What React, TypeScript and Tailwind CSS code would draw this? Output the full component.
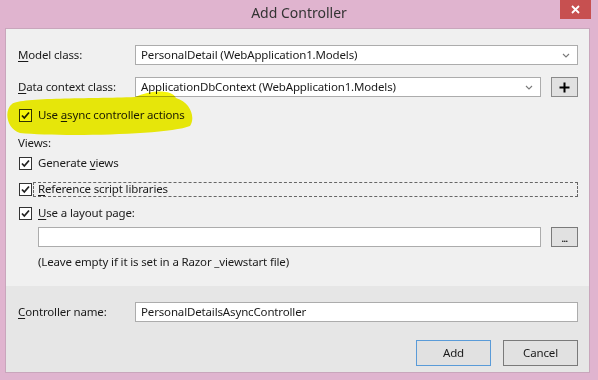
import React from "react";

const font = { fontFamily: '"Segoe UI", "Noto Sans", "Open Sans", sans-serif' };

function Check() {
  return (
    <span className="flex h-[13px] w-[13px] shrink-0 items-center justify-center border border-[#333333] bg-white">
      <svg width="11" height="11" viewBox="0 0 11 11">
        <path d="M2 5.5 L4.3 8 L9 2.5" fill="none" stroke="#222" strokeWidth="1.8" />
      </svg>
    </span>
  );
}

function Chevron() {
  return (
    <svg width="8" height="5" viewBox="0 0 8 5" className="shrink-0">
      <path d="M1 1 L4 4 L7 1" fill="none" stroke="#7a7a7a" strokeWidth="1.1" />
    </svg>
  );
}

function U({ children }: { children: React.ReactNode }) {
  return <span className="underline underline-offset-2 decoration-1">{children}</span>;
}

export default function App() {
  return (
    <div
      className="relative flex h-[380px] w-[598px] flex-col overflow-hidden bg-[#e0b4cf] text-[11.5px] tracking-[-0.15px] text-[#1a1a1a]"
      style={font}
    >
      {/* title bar */}
      <div className="relative flex h-[28px] shrink-0 items-center justify-center">
        <span className="pb-[3px] text-[14px] tracking-normal text-[#333333]">Add Controller</span>
        <div className="absolute right-[7px] top-0 flex h-[19px] w-[31px] items-center justify-center bg-[#c75050]">
          <svg width="9" height="9" viewBox="0 0 9 9">
            <path d="M1 1 L8 8 M8 1 L1 8" stroke="#ffffff" strokeWidth="1.8" />
          </svg>
        </div>
      </div>

      {/* client */}
      <div className="ml-[5px] mr-[8px] flex h-[345px] flex-col border border-[#c9a6bc]">
        {/* upper section */}
        <div className="flex h-[257px] flex-col bg-[#f0f0f0] pl-[12px] pr-[11px] pt-[16px]">
          <div className="flex h-[20px] items-center">
            <span className="w-[117px]">
              <U>M</U>odel class:
            </span>
            <div className="flex h-[20px] flex-1 items-center justify-between border border-[#acacac] bg-white pl-[5px] pr-[7px]">
              <span>PersonalDetail (WebApplication1.Models)</span>
              <Chevron />
            </div>
          </div>
          <div className="mt-[12px] flex h-[20px] items-center">
            <span className="w-[117px]">
              <U>D</U>ata context class:
            </span>
            <div className="flex h-[20px] flex-1 items-center justify-between border border-[#acacac] bg-white pl-[5px] pr-[7px]">
              <span>ApplicationDbContext (WebApplication1.Models)</span>
              <Chevron />
            </div>
            <div className="ml-[10px] flex h-[20px] w-[27px] items-center justify-center border border-[#8a8a8a] bg-[#e1e1e1]">
              <svg width="11" height="11" viewBox="0 0 11 11">
                <path d="M5.5 0.5 V10.5 M0.5 5.5 H10.5" stroke="#000" strokeWidth="2" />
              </svg>
            </div>
          </div>
          <div className="mt-[8px] flex h-[20px] items-center pl-[1px]">
            <Check />
            <span className="ml-[6px]">
              Use <U>a</U>sync controller actions
            </span>
          </div>
          <div className="mt-[8px] flex h-[20px] items-center">Views:</div>
          <div className="flex h-[20px] items-center pl-[1px]">
            <Check />
            <span className="ml-[6px]">
              Generate <U>v</U>iews
            </span>
          </div>
          <div className="mt-[6px] flex h-[20px] items-center pl-[1px]">
            <Check />
            <div className="ml-[1px] flex h-[15px] flex-1 items-center border border-dashed border-[#666666] pl-[4px]">
              <span>
                <U>R</U>eference script libraries
              </span>
            </div>
          </div>
          <div className="mt-[4px] flex h-[20px] items-center pl-[1px]">
            <Check />
            <span className="ml-[6px]">
              <U>U</U>se a layout page:
            </span>
          </div>
          <div className="mt-[4px] flex h-[20px] items-center pl-[20px]">
            <div className="h-[20px] flex-1 border border-[#acacac] bg-white" />
            <div className="ml-[10px] flex h-[20px] w-[27px] items-end justify-center border border-[#7a7a7a] bg-[#e1e1e1] pb-[3px]">
              <span className="text-[9px] font-bold leading-[9px] tracking-[-0.5px]">...</span>
            </div>
          </div>
          <div className="mt-[5px] flex h-[20px] items-center pl-[20px]">
            (Leave empty if it is set in a Razor _viewstart file)
          </div>
        </div>

        {/* lower section */}
        <div className="flex flex-1 flex-col bg-[#e6e6e6] pl-[12px] pr-[11px] pt-[16px]">
          <div className="flex h-[20px] items-center">
            <span className="w-[117px]">
              <U>C</U>ontroller name:
            </span>
            <div className="flex h-[20px] flex-1 items-center border border-[#acacac] bg-white pl-[5px]">
              PersonalDetailsAsyncController
            </div>
          </div>
          <div className="mt-[18px] flex justify-end gap-[12px]">
            <div className="flex h-[26px] w-[75px] items-center justify-center border border-[#5a9bd8] bg-[#e1e1e1]">
              Add
            </div>
            <div className="flex h-[26px] w-[75px] items-center justify-center border border-[#7a7a7a] bg-[#e1e1e1]">
              Cancel
            </div>
          </div>
        </div>
      </div>

      {/* yellow highlighter annotation */}
      <svg
        className="pointer-events-none absolute left-0 top-0 mix-blend-multiply"
        width="598"
        height="380"
        viewBox="0 0 598 380"
      >
        <path
          d="M12 104 C 22 97, 90 99, 135 97 C 150 90, 172 89, 176 98 C 190 102, 196 117, 190 126 C 168 135, 60 137, 20 133 C 6 129, 4 110, 12 104 Z"
          fill="#f5f50a"
        />
      </svg>
    </div>
  );
}
